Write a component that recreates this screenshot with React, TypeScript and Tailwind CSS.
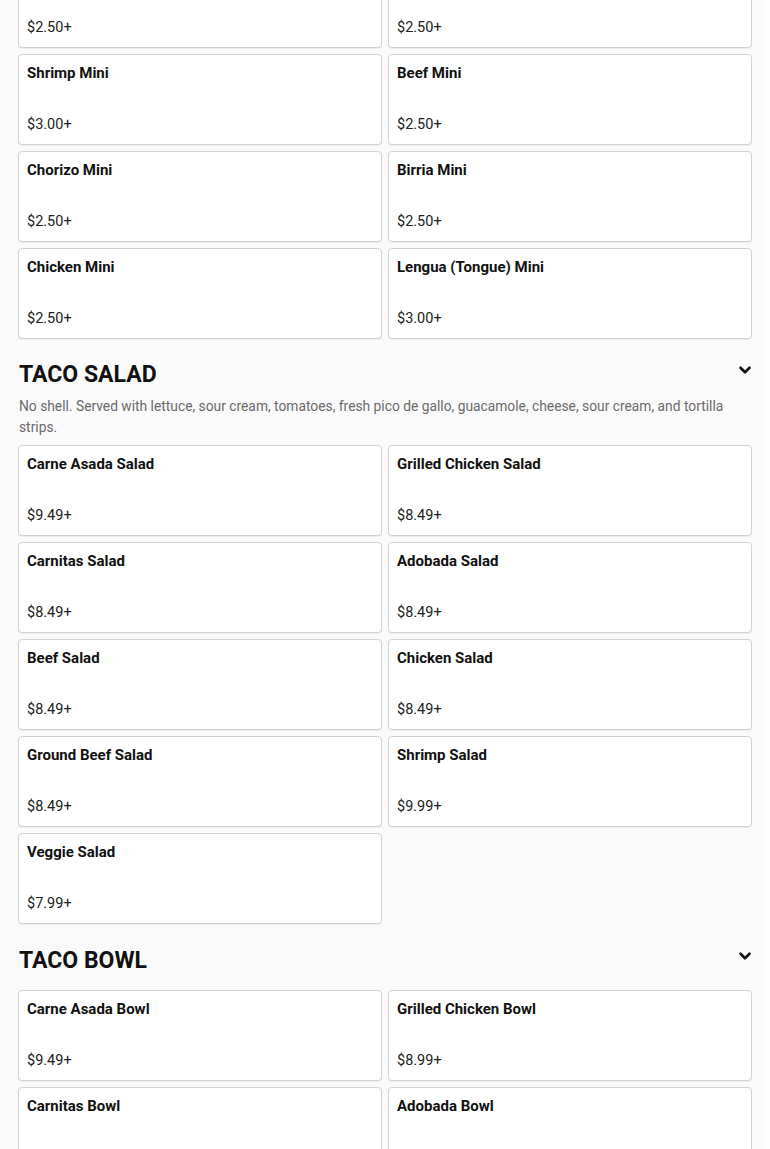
import { ChevronDown } from "lucide-react";

type Item = { name: string; price: string };

const minis: Item[] = [
  { name: "Adobada Mini", price: "$2.50+" },
  { name: "Carnitas Mini", price: "$2.50+" },
  { name: "Shrimp Mini", price: "$3.00+" },
  { name: "Beef Mini", price: "$2.50+" },
  { name: "Chorizo Mini", price: "$2.50+" },
  { name: "Birria Mini", price: "$2.50+" },
  { name: "Chicken Mini", price: "$2.50+" },
  { name: "Lengua (Tongue) Mini", price: "$3.00+" },
];

const salads: Item[] = [
  { name: "Carne Asada Salad", price: "$9.49+" },
  { name: "Grilled Chicken Salad", price: "$8.49+" },
  { name: "Carnitas Salad", price: "$8.49+" },
  { name: "Adobada Salad", price: "$8.49+" },
  { name: "Beef Salad", price: "$8.49+" },
  { name: "Chicken Salad", price: "$8.49+" },
  { name: "Ground Beef Salad", price: "$8.49+" },
  { name: "Shrimp Salad", price: "$9.99+" },
  { name: "Veggie Salad", price: "$7.99+" },
];

const bowls: Item[] = [
  { name: "Carne Asada Bowl", price: "$9.49+" },
  { name: "Grilled Chicken Bowl", price: "$8.99+" },
  { name: "Carnitas Bowl", price: "$8.49+" },
  { name: "Adobada Bowl", price: "$8.49+" },
];

function Card({ item }: { item: Item }) {
  return (
    <div className="h-[91px] bg-white border border-[#d2d2d2] rounded-[4px] shadow-[0_1px_1px_rgba(0,0,0,0.06)] px-2 pt-[8px] pb-[9px] flex flex-col justify-between">
      <div className="text-[15px] leading-5 font-bold text-[#111]">{item.name}</div>
      <div className="text-[14.5px] leading-5 text-[#222]">{item.price}</div>
    </div>
  );
}

function Grid({ items }: { items: Item[] }) {
  return (
    <div className="grid grid-cols-2 gap-[6px]">
      {items.map((it) => (
        <Card key={it.name} item={it} />
      ))}
    </div>
  );
}

function Header({ title }: { title: string }) {
  return (
    <div className="flex items-center justify-between pl-[1px]">
      <h2 className="text-[23px] leading-7 font-bold text-[#111]">{title}</h2>
      <ChevronDown className="w-[18px] h-[18px] text-[#111] mr-[-2px] -mt-[10px]" strokeWidth={3.5} />
    </div>
  );
}

export default function App() {
  return (
    <div
      className="h-[1149px] overflow-hidden bg-[#fafafa] flex"
      style={{ fontFamily: "Roboto, 'Noto Sans', sans-serif" }}
    >
      <div className="w-[764px] pl-[18px] pr-[12px] -mt-[43px]">
        <Grid items={minis} />

        <div className="mt-[22px]">
          <Header title="TACO SALAD" />
          <p className="mt-[7px] pl-[1px] text-[13.8px] leading-[21px] text-[#6b6b6b]">
            No shell. Served with lettuce, sour cream, tomatoes, fresh pico de gallo, guacamole, cheese, sour cream, and tortilla strips.
          </p>
          <div className="mt-[7px]">
            <Grid items={salads} />
          </div>
        </div>

        <div className="mt-[23px]">
          <Header title="TACO BOWL" />
          <div className="mt-[15px]">
            <Grid items={bowls} />
          </div>
        </div>
      </div>
      <div className="flex-1 bg-[#fdfdfd]" />
    </div>
  );
}
